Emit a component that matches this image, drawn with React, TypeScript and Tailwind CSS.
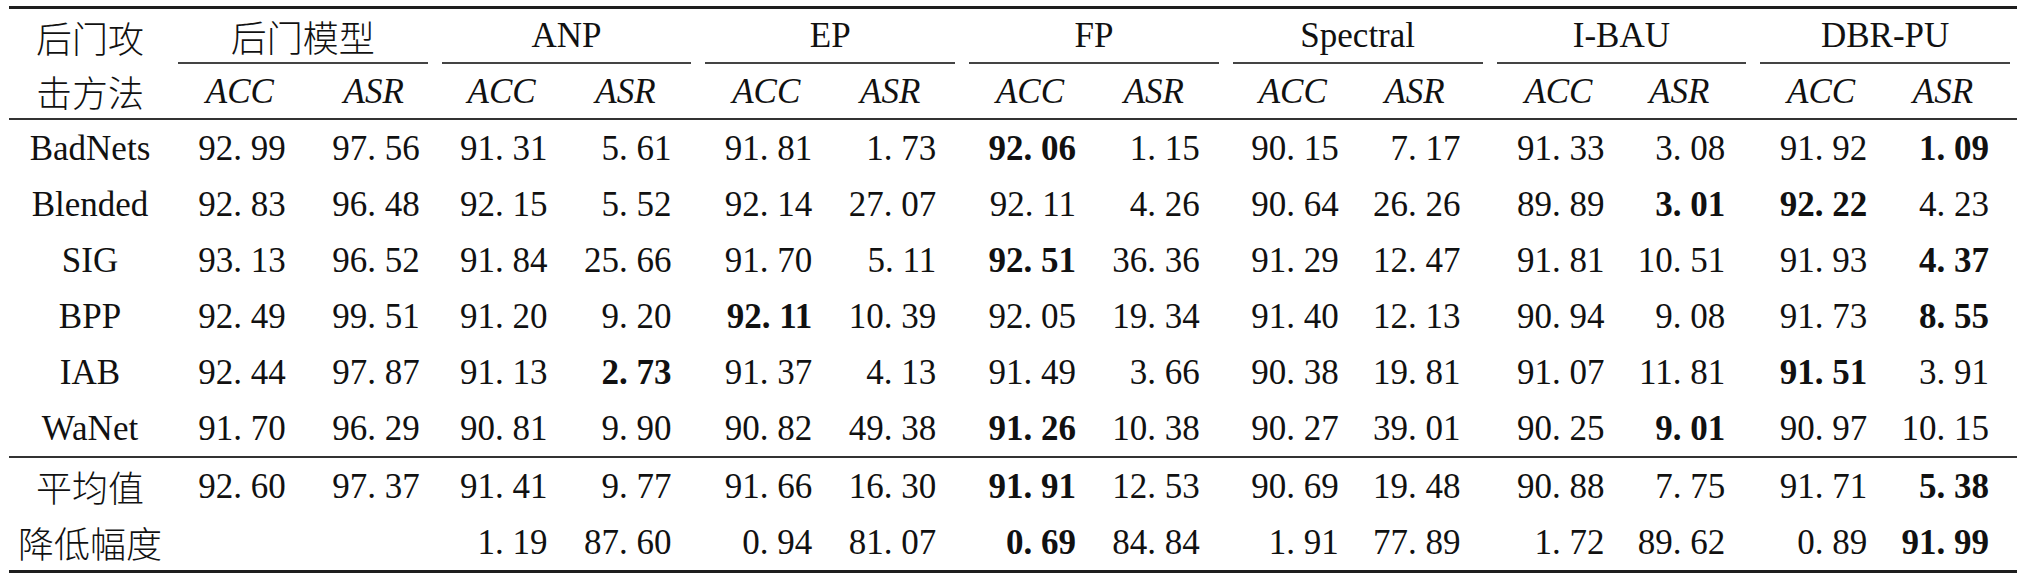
type Row = { name: string; cjk?: boolean; vals: string[] };

const groups = ["后门模型", "ANP", "EP", "FP", "Spectral", "I-BAU", "DBR-PU"];

// a trailing * marks a bold (best) value
const attacks: Row[] = [
  { name: "BadNets", vals: ["92.99", "97.56", "91.31", "5.61", "91.81", "1.73", "92.06*", "1.15", "90.15", "7.17", "91.33", "3.08", "91.92", "1.09*"] },
  { name: "Blended", vals: ["92.83", "96.48", "92.15", "5.52", "92.14", "27.07", "92.11", "4.26", "90.64", "26.26", "89.89", "3.01*", "92.22*", "4.23"] },
  { name: "SIG", vals: ["93.13", "96.52", "91.84", "25.66", "91.70", "5.11", "92.51*", "36.36", "91.29", "12.47", "91.81", "10.51", "91.93", "4.37*"] },
  { name: "BPP", vals: ["92.49", "99.51", "91.20", "9.20", "92.11*", "10.39", "92.05", "19.34", "91.40", "12.13", "90.94", "9.08", "91.73", "8.55*"] },
  { name: "IAB", vals: ["92.44", "97.87", "91.13", "2.73*", "91.37", "4.13", "91.49", "3.66", "90.38", "19.81", "91.07", "11.81", "91.51*", "3.91"] },
  { name: "WaNet", vals: ["91.70", "96.29", "90.81", "9.90", "90.82", "49.38", "91.26*", "10.38", "90.27", "39.01", "90.25", "9.01*", "90.97", "10.15"] },
];

const summary: Row[] = [
  { name: "平均值", cjk: true, vals: ["92.60", "97.37", "91.41", "9.77", "91.66", "16.30", "91.91*", "12.53", "90.69", "19.48", "90.88", "7.75", "91.71", "5.38*"] },
  { name: "降低幅度", cjk: true, vals: ["", "", "1.19", "87.60", "0.94", "81.07", "0.69*", "84.84", "1.91", "77.89", "1.72", "89.62", "0.89", "91.99*"] },
];

const pads = [
  "pr-[17px]", "pr-[15px]",
  "pr-[19px]", "pr-[27px]",
  "pr-[18px]", "pr-[26px]",
  "pr-[18px]", "pr-[26px]",
  "pr-[19px]", "pr-[29px]",
  "pr-[17px]", "pr-[28px]",
  "pr-[18px]", "pr-[28px]",
];

const cjk = "font-['Noto_Sans_CJK_SC',sans-serif] font-light text-[36px]";

const fmt = (v: string) => v.replace("*", "").replace(".", ". ");

const DataRow = ({ row }: { row: Row }) => (
  <div className="grid grid-cols-[162px_repeat(14,minmax(0,1fr))] h-[56px] items-center">
    <div className={row.cjk ? `text-center ${cjk}` : "text-center"}>{row.name}</div>
    {row.vals.map((v, i) => (
      <div key={i} className={`flex justify-end ${pads[i]}`}>
        <span className={`w-[92px] text-right whitespace-nowrap ${v.endsWith("*") ? "font-bold" : ""}`}>
          {fmt(v)}
        </span>
      </div>
    ))}
  </div>
);

export default function App() {
  return (
    <div className="bg-white w-[2032px] h-[576px] pt-[6px] pl-[9px] text-[#111] font-['Liberation_Serif','Noto_Sans_CJK_SC',serif] text-[35px] leading-none">
      <div className="w-[2008px] border-t-[3px] border-b-[3px] border-[#1e1e1e]">
        {/* header */}
        <div className="flex border-b-[2px] border-[#333]">
          <div className="w-[162px] flex flex-col">
            <div className={`h-[55px] flex items-center justify-center ${cjk}`}>后门攻</div>
            <div className={`h-[54px] flex items-center justify-center ${cjk}`}>击方法</div>
          </div>
          <div className="flex-1 grid grid-cols-7">
            {groups.map((g, gi) => (
              <div key={g} className="flex flex-col">
                <div
                  className={`h-[55px] mx-[7px] border-b-[2px] border-[#444] flex items-center justify-center ${
                    gi === 0 ? cjk : ""
                  }`}
                >
                  {g}
                </div>
                <div className="h-[54px] grid grid-cols-2 items-center">
                  {["ACC", "ASR"].map((s, si) => (
                    <div key={s} className={`flex justify-end ${pads[gi * 2 + si]}`}>
                      <span className="w-[92px] text-center italic">{s}</span>
                    </div>
                  ))}
                </div>
              </div>
            ))}
          </div>
        </div>

        {/* attack rows */}
        <div className="border-b-[2px] border-[#333]">
          {attacks.map((r) => (
            <DataRow key={r.name} row={r} />
          ))}
        </div>

        {/* summary rows */}
        <div>
          {summary.map((r) => (
            <DataRow key={r.name} row={r} />
          ))}
        </div>
      </div>
    </div>
  );
}
